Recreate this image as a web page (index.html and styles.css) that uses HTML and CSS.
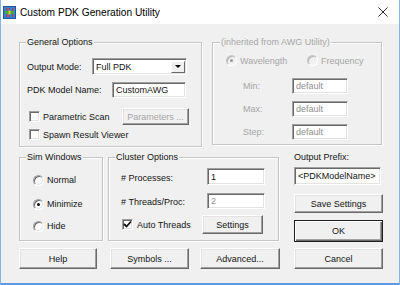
FILE: index.html
```html
<!DOCTYPE html>
<html lang="en">
<head>
  <meta charset="UTF-8" />
  <title>Custom PDK Generation Utility</title>
  <link rel="stylesheet" href="styles.css">
</head>
<body>
  <div class="window">
    <div class="titlebar">
      <svg class="app-icon" width="13" height="13" viewBox="0 0 13 13">
        <rect x="0.5" y="0.5" width="12" height="12" fill="#3b7fd0" stroke="#24569a"/>
        <rect x="3" y="2" width="1" height="9" fill="#d6302a"/>
        <rect x="6" y="2" width="1" height="9" fill="#d6302a"/>
        <rect x="9" y="2" width="1" height="9" fill="#d6302a"/>
        <rect x="2" y="5" width="9" height="3" fill="#3fae3a"/>
        <rect x="5.5" y="4.5" width="2" height="4" fill="#e2c23a"/>
      </svg>
      <span class="title">Custom PDK Generation Utility</span>
      <svg class="close" width="10" height="10" viewBox="0 0 10 10">
        <path d="M0.5 0.5 L9.5 9.5 M9.5 0.5 L0.5 9.5" stroke="#2b2b2b" stroke-width="1"/>
      </svg>
    </div>

    <div class="dialog">
      <div class="row-top">
        <fieldset class="group general">
          <legend>General Options</legend>
          <div class="field mode-row">
            <label class="lbl mode-lbl">Output Mode:</label>
            <div class="combo">
              <span class="combo-text">Full PDK</span>
              <span class="combo-btn"><i class="arrow"></i></span>
            </div>
          </div>
          <div class="field name-row">
            <label class="lbl name-lbl">PDK Model Name:</label>
            <input class="edit name-edit" type="text" value="CustomAWG">
          </div>
          <div class="field scan-row">
            <span class="opt scan-opt"><span class="check"></span>Parametric Scan</span>
            <button class="btn params-btn" disabled>Parameters ...</button>
          </div>
          <div class="field spawn-row">
            <span class="opt"><span class="check"></span>Spawn Result Viewer</span>
          </div>
        </fieldset>

        <fieldset class="group inherited off">
          <legend>(inherited from AWG Utility)</legend>
          <div class="field radio-row">
            <span class="opt wave-opt"><span class="radio on"></span>Wavelength</span>
            <span class="opt"><span class="radio"></span>Frequency</span>
          </div>
          <div class="field range-row min-row">
            <label class="lbl range-lbl">Min:</label>
            <input class="edit range-edit" type="text" value="default" disabled>
          </div>
          <div class="field range-row">
            <label class="lbl range-lbl">Max:</label>
            <input class="edit range-edit" type="text" value="default" disabled>
          </div>
          <div class="field range-row">
            <label class="lbl range-lbl">Step:</label>
            <input class="edit range-edit" type="text" value="default" disabled>
          </div>
        </fieldset>
      </div>

      <div class="row-mid">
        <fieldset class="group sim">
          <legend>Sim Windows</legend>
          <div class="field sim-row first">
            <span class="opt"><span class="radio"></span>Normal</span>
          </div>
          <div class="field sim-row">
            <span class="opt"><span class="radio on"></span>Minimize</span>
          </div>
          <div class="field sim-row last">
            <span class="opt"><span class="radio"></span>Hide</span>
          </div>
        </fieldset>

        <fieldset class="group cluster">
          <legend>Cluster Options</legend>
          <div class="field proc-row">
            <label class="lbl cluster-lbl">#&nbsp;Processes:</label>
            <input class="edit cluster-edit" type="text" value="1">
          </div>
          <div class="field threads-row">
            <label class="lbl cluster-lbl">#&nbsp;Threads/Proc:</label>
            <input class="edit cluster-edit" type="text" value="2" disabled>
          </div>
          <div class="field auto-row">
            <span class="opt auto-opt"><span class="check on">
              <svg width="9" height="9" viewBox="0 0 9 9"><path d="M1 4 L3.5 6.5 L8 1.5" fill="none" stroke="#111" stroke-width="1.8"/></svg>
            </span>Auto Threads</span>
            <button class="btn settings-btn">Settings</button>
          </div>
        </fieldset>

        <div class="side">
          <label class="lbl prefix-lbl">Output Prefix:</label>
          <input class="edit prefix-edit" type="text" value="&lt;PDKModelName&gt;">
          <button class="btn save-btn">Save Settings</button>
          <button class="btn default ok-btn">OK</button>
        </div>
      </div>

      <div class="row-bottom">
        <button class="btn help-btn">Help</button>
        <button class="btn symbols-btn">Symbols ...</button>
        <button class="btn advanced-btn">Advanced...</button>
        <button class="btn cancel-btn">Cancel</button>
      </div>
    </div>
  </div>
</body>
</html>
```

FILE: styles.css
```css
* {
  box-sizing: border-box;
  margin: 0;
  padding: 0;
}

body {
  font-family: "Liberation Sans", Arial, sans-serif;
  font-size: 9px;
  color: #141414;
  background: #f0f0f0;
}

.window {
  width: 400px;
  height: 285px;
  background: #f0f0f0;
  border-left: 1px solid #86b4e4;
  border-right: 1px solid #86b4e4;
  border-bottom: 2px solid #5d9be0;
}

/* title bar */
.titlebar {
  height: 24px;
  background: #fff;
  display: flex;
  align-items: center;
  padding-left: 2px;
}

.app-icon {
  margin-right: 4px;
}

.title {
  font-size: 10.2px;
  color: #000;
  flex: 1;
}

.close {
  margin-right: 11px;
}

/* dialog body */
.dialog {
  padding: 12px 16px 0 18px;
}

.row-top,
.row-mid,
.row-bottom {
  display: flex;
  align-items: flex-start;
}

.row-mid {
  margin-top: 4px;
}

.row-bottom {
  margin-top: 6px;
}

/* group boxes */
.group {
  border: 1px solid #c4c4c4;
  box-shadow: inset 1px 1px 0 #fff, 1px 1px 0 #fff;
  min-width: 0;
}

.group legend {
  line-height: 12px;
  height: 12px;
  padding: 0 1px;
  margin-left: -1px;
  background: #f0f0f0;
  color: #141414;
}

.off,
.off legend {
  color: #a6a6a6;
}

.field {
  display: flex;
  align-items: center;
}

.lbl {
  flex: none;
}

.opt {
  display: flex;
  align-items: center;
  flex: none;
}

/* sunken edit boxes */
.edit,
.combo {
  height: 16px;
  background: #fff;
  border: 1px solid;
  border-color: #a0a0a0 #fff #fff #a0a0a0;
  box-shadow: inset 1px 1px 0 #696969, inset -1px -1px 0 #e3e3e3;
  font-family: inherit;
  font-size: 9px;
  color: #141414;
  padding: 0 3px;
  outline: none;
}

.edit:disabled {
  color: #8e8e8e;
  background: #fff;
}

.combo {
  display: flex;
  align-items: center;
  padding: 0 1px 0 3px;
}

.combo-text {
  flex: 1;
}

.combo-btn {
  width: 14px;
  height: 12px;
  background: #f0f0f0;
  border: 1px solid;
  border-color: #fff #696969 #696969 #fff;
  display: flex;
  align-items: center;
  justify-content: center;
}

.arrow {
  width: 0;
  height: 0;
  border-left: 3px solid transparent;
  border-right: 3px solid transparent;
  border-top: 3px solid #000;
}

/* check boxes and radios */
.check,
.radio {
  width: 11px;
  height: 11px;
  flex: none;
  background: #fff;
  border: 1px solid;
  border-color: #a0a0a0 #fff #fff #a0a0a0;
  box-shadow: inset 1px 1px 0 #696969, inset -1px -1px 0 #e3e3e3;
  display: flex;
  align-items: center;
  justify-content: center;
}

.check {
  margin: 0 3px 0 2px;
}

.radio {
  border-radius: 50%;
  margin-right: 3px;
}

.radio.on::after {
  content: "";
  width: 3px;
  height: 3px;
  border-radius: 50%;
  background: #111;
}

.off .radio {
  border-color: #c8c8c8 #fff #fff #c8c8c8;
  box-shadow: inset 1px 1px 0 #b4b4b4;
  background: #f0f0f0;
}

.off .radio.on::after {
  background: #9a9a9a;
}

/* raised buttons */
.btn {
  background: #f0f0f0;
  border: 1px solid;
  border-color: #fff #696969 #696969 #fff;
  box-shadow: inset -1px -1px 0 #a0a0a0, inset 1px 1px 0 #e3e3e3;
  font-family: inherit;
  font-size: 9px;
  color: #141414;
  flex: none;
}

.btn:disabled {
  color: #a6a6a6;
}

.btn.default {
  border: 1px solid #1e1e1e;
  box-shadow: inset 1px 1px 0 #fff, inset -1px -1px 0 #696969, inset -2px -2px 0 #a0a0a0;
}

/* general options */
.general {
  width: 183px;
  padding: 0 6px 5px 7px;
}

.mode-row {
  margin-top: 10px;
  height: 17px;
}

.mode-lbl {
  width: 65px;
}

.combo {
  width: 95px;
  height: 17px;
}

.name-row {
  margin-top: 7px;
  height: 16px;
}

.name-lbl {
  width: 85px;
}

.name-edit {
  width: 74px;
}

.scan-row {
  margin-top: 10px;
  height: 17px;
}

.scan-opt {
  width: 95px;
}

.params-btn {
  width: 67px;
  height: 17px;
}

.spawn-row {
  margin-top: 3px;
  height: 13px;
}

/* inherited options */
.inherited {
  width: 170px;
  margin-left: 10px;
  padding: 0 6px 4px 8px;
}

.radio-row {
  margin-top: 6px;
  height: 13px;
  padding-left: 5px;
}

.wave-opt {
  width: 81px;
}

.range-row {
  margin-top: 7px;
  height: 16px;
  padding-left: 22px;
}

.min-row {
  margin-top: 11px;
}

.range-lbl {
  width: 49px;
}

.range-edit {
  width: 56px;
}

/* sim windows */
.sim {
  width: 84px;
  padding: 0 4px 7px 7px;
}

.sim-row {
  margin-top: 10px;
  height: 14px;
  padding-left: 6px;
}

.sim-row.last {
  margin-top: 8px;
}

/* cluster options */
.cluster {
  width: 171px;
  margin-left: 5px;
  padding: 0 4px 6px 7px;
}

.cluster-lbl {
  width: 86px;
  padding-left: 5px;
  box-sizing: content-box;
  width: 86px;
  margin-top: 2px;
}

.proc-row {
  margin-top: 5px;
  height: 17px;
}

.cluster-edit {
  width: 58px;
  height: 17px;
}

.threads-row {
  margin-top: 8px;
  height: 16px;
}

.threads-row .cluster-edit {
  height: 16px;
}

.auto-row {
  margin-top: 6px;
  height: 19px;
}

.auto-opt {
  width: 86px;
  padding-left: 4px;
}

.auto-opt .check {
  margin-right: 4px;
}

.settings-btn {
  width: 61px;
  height: 19px;
}

/* right column */
.side {
  width: 89px;
  margin-left: 15px;
  display: flex;
  flex-direction: column;
}

.prefix-lbl {
  line-height: 12px;
}

.prefix-edit {
  margin-top: 4px;
  width: 87px;
  height: 18px;
}

.save-btn {
  margin-top: 9px;
  height: 19px;
}

.ok-btn {
  margin-top: 7px;
  height: 22px;
}

/* bottom buttons */
.row-bottom .btn {
  height: 21px;
}

.help-btn {
  width: 78px;
}

.symbols-btn {
  width: 79px;
  margin-left: 13px;
}

.advanced-btn {
  width: 80px;
  margin-left: 11px;
}

.cancel-btn {
  width: 89px;
  margin-left: 14px;
}
```
